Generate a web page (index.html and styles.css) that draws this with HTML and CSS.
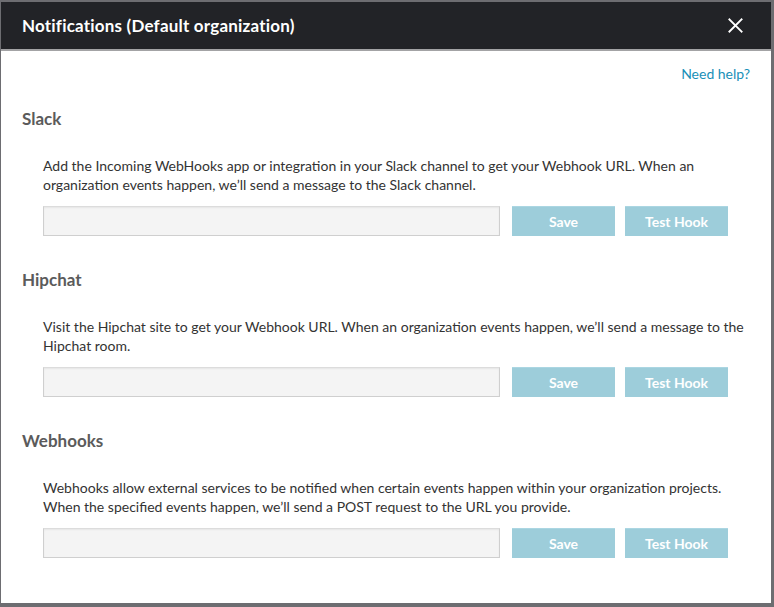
FILE: index.html
```html
<!DOCTYPE html>
<html>
<head>
<meta charset="utf-8">
<link rel="stylesheet" href="styles.css">
</head>
<body>
<div class="modal">
  <div class="modal-header">
    <h1 class="modal-title">Notifications (Default organization)</h1>
    <button class="close" aria-label="Close">
      <svg width="16" height="16" viewBox="0 0 16 16"><path d="M1.5 1.5 L14.5 14.5 M14.5 1.5 L1.5 14.5" stroke="#fff" stroke-width="2" fill="none" stroke-linecap="square"/></svg>
    </button>
  </div>
  <div class="modal-body">
    <div class="help-row"><a class="help" href="#">Need help?</a></div>

    <section class="service">
      <h2 class="service-title">Slack</h2>
      <div class="service-body">
        <p class="desc">Add the Incoming WebHooks app or integration in your Slack channel to get your Webhook URL. When an organization events happen, we’ll send a message to the Slack channel.</p>
        <div class="form-row">
          <input class="hook-input" type="text">
          <button class="btn">Save</button>
          <button class="btn">Test Hook</button>
        </div>
      </div>
    </section>

    <section class="service">
      <h2 class="service-title">Hipchat</h2>
      <div class="service-body">
        <p class="desc">Visit the Hipchat site to get your Webhook URL. When an organization events happen, we’ll send a message to the Hipchat room.</p>
        <div class="form-row">
          <input class="hook-input" type="text">
          <button class="btn">Save</button>
          <button class="btn">Test Hook</button>
        </div>
      </div>
    </section>

    <section class="service">
      <h2 class="service-title">Webhooks</h2>
      <div class="service-body">
        <p class="desc">Webhooks allow external services to be notified when certain events happen within your organization projects. When the specified events happen, we’ll send a POST request to the URL you provide.</p>
        <div class="form-row">
          <input class="hook-input" type="text">
          <button class="btn">Save</button>
          <button class="btn">Test Hook</button>
        </div>
      </div>
    </section>
  </div>
</div>
</body>
</html>
```
FILE: styles.css
```css
* { box-sizing: border-box; }
html, body { margin: 0; padding: 0; }
body {
  font-family: Lato, "Open Sans", sans-serif;
  background: #6d6d71;
  width: 774px;
  height: 607px;
  overflow: hidden;
}
.modal {
  margin: 2px 3px 0 1px;
  height: 601px;
  background: #fff;
  display: flex;
  flex-direction: column;
}
.modal-header {
  height: 49px;
  background: #222327;
  border-bottom: 2px solid #a3a3a5;
  display: flex;
  align-items: center;
  justify-content: space-between;
  padding: 0 28px 0 21px;
}
.modal-title {
  margin: 0;
  color: #fff;
  font-size: 17px;
  font-weight: 700;
  letter-spacing: 0.2px;
}
.close {
  background: none;
  border: 0;
  padding: 0;
  width: 15px;
  height: 15px;
  display: flex;
  cursor: pointer;
}
.close svg { width: 15px; height: 15px; }
.modal-body {
  padding: 13px 21px 0 21px;
  flex: 1;
}
.help-row {
  display: flex;
  justify-content: flex-end;
  height: 20px;
}
.help {
  color: #1990b8;
  text-decoration: none;
  font-size: 14px;
  line-height: 20px;
}
.service { margin-top: 24px; }
.service + .service { margin-top: 33px; }
.service-title {
  margin: 0;
  font-size: 17px;
  line-height: 22px;
  font-weight: 700;
  color: #5b5b5b;
}
.service-body {
  padding-left: 21px;
  margin-top: 26px;
}
.desc {
  margin: 0;
  font-size: 14px;
  line-height: 19px;
  color: #333;
}
.form-row {
  display: flex;
  margin-top: 12px;
}
.hook-input {
  width: 457px;
  height: 30px;
  background: #f4f4f4;
  border: 1px solid #cfcfcf;
  border-top-color: #dcdcdc;
  box-shadow: inset 0 1px 2px rgba(0,0,0,0.06);
  margin: 0 12px 0 0;
  padding: 0 8px;
  font: inherit;
}
.btn {
  width: 103px;
  height: 30px;
  background: #9dcdda;
  border: 0;
  border-top: 1px solid #abd6e2;
  color: #fff;
  font-family: inherit;
  font-size: 14px;
  font-weight: 700;
  margin-right: 10px;
  padding: 0;
}
```
